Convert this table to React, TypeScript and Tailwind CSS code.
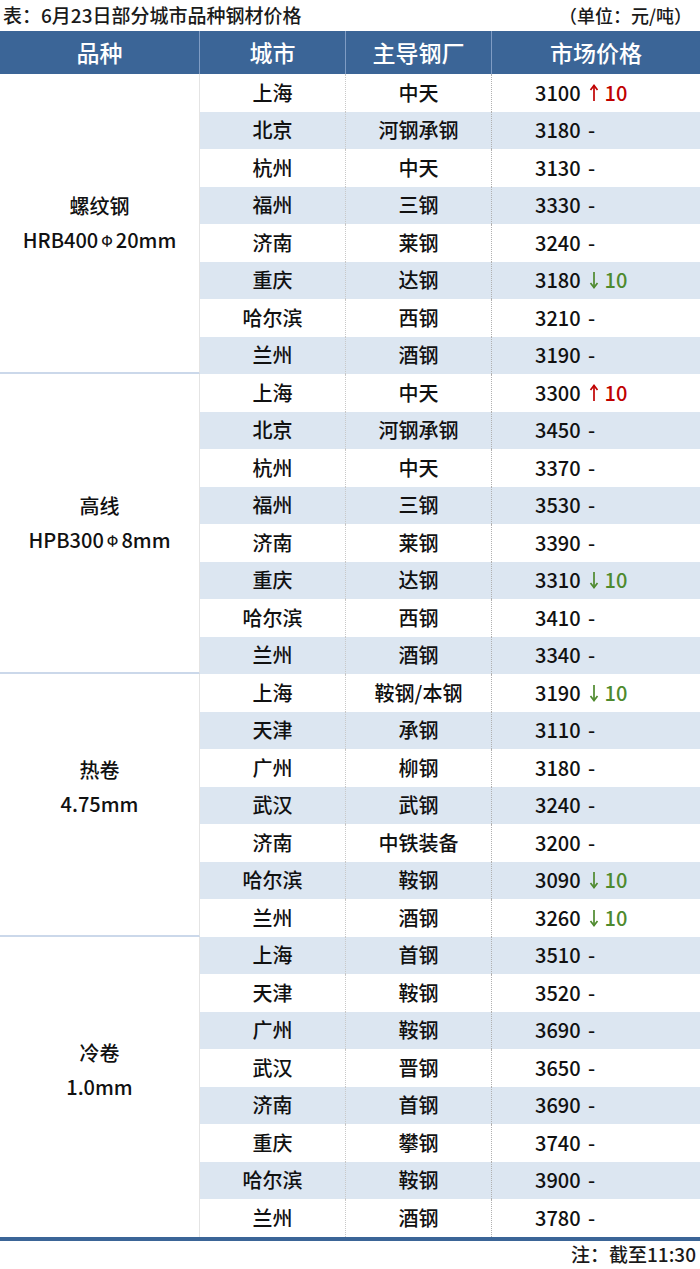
import React from 'react';

type Row = { city: string; mill: string; price: number; change?: number };
type Group = { name: string; spec: React.ReactNode; rows: Row[]; lift?: boolean };

const phi = <span className="text-[14px] align-[2px] mx-[3px]">Φ</span>;

const groups: Group[] = [
  {
    name: '螺纹钢',
    spec: <>HRB400{phi}20mm</>,
    rows: [
      { city: '上海', mill: '中天', price: 3100, change: 10 },
      { city: '北京', mill: '河钢承钢', price: 3180 },
      { city: '杭州', mill: '中天', price: 3130 },
      { city: '福州', mill: '三钢', price: 3330 },
      { city: '济南', mill: '莱钢', price: 3240 },
      { city: '重庆', mill: '达钢', price: 3180, change: -10 },
      { city: '哈尔滨', mill: '西钢', price: 3210 },
      { city: '兰州', mill: '酒钢', price: 3190 },
    ],
  },
  {
    name: '高线',
    spec: <>HPB300{phi}8mm</>,
    rows: [
      { city: '上海', mill: '中天', price: 3300, change: 10 },
      { city: '北京', mill: '河钢承钢', price: 3450 },
      { city: '杭州', mill: '中天', price: 3370 },
      { city: '福州', mill: '三钢', price: 3530 },
      { city: '济南', mill: '莱钢', price: 3390 },
      { city: '重庆', mill: '达钢', price: 3310, change: -10 },
      { city: '哈尔滨', mill: '西钢', price: 3410 },
      { city: '兰州', mill: '酒钢', price: 3340 },
    ],
  },
  {
    name: '热卷',
    spec: <>4.75mm</>,
    lift: true,
    rows: [
      { city: '上海', mill: '鞍钢/本钢', price: 3190, change: -10 },
      { city: '天津', mill: '承钢', price: 3110 },
      { city: '广州', mill: '柳钢', price: 3180 },
      { city: '武汉', mill: '武钢', price: 3240 },
      { city: '济南', mill: '中铁装备', price: 3200 },
      { city: '哈尔滨', mill: '鞍钢', price: 3090, change: -10 },
      { city: '兰州', mill: '酒钢', price: 3260, change: -10 },
    ],
  },
  {
    name: '冷卷',
    spec: <>1.0mm</>,
    lift: true,
    rows: [
      { city: '上海', mill: '首钢', price: 3510 },
      { city: '天津', mill: '鞍钢', price: 3520 },
      { city: '广州', mill: '鞍钢', price: 3690 },
      { city: '武汉', mill: '晋钢', price: 3650 },
      { city: '济南', mill: '首钢', price: 3690 },
      { city: '重庆', mill: '攀钢', price: 3740 },
      { city: '哈尔滨', mill: '鞍钢', price: 3900 },
      { city: '兰州', mill: '酒钢', price: 3780 },
    ],
  },
];

const Arrow = ({ up }: { up: boolean }) => (
  <svg width="10" height="20" viewBox="0 0 10 20" className="inline-block ml-[8px] mr-[6px]">
    {up ? (
      <>
        <line x1="5" y1="2.5" x2="5" y2="18" stroke="currentColor" strokeWidth="1.7" />
        <polyline points="1.5,7 5,2.5 8.5,7" fill="none" stroke="currentColor" strokeWidth="1.7" />
      </>
    ) : (
      <>
        <line x1="5" y1="2" x2="5" y2="17.5" stroke="currentColor" strokeWidth="1.7" />
        <polyline points="1.5,13 5,17.5 8.5,13" fill="none" stroke="currentColor" strokeWidth="1.7" />
      </>
    )}
  </svg>
);

const Price = ({ price, change }: { price: number; change?: number }) => {
  if (!change) {
    return (
      <span>
        {price} <span className="ml-[3px]">-</span>
      </span>
    );
  }
  const up = change > 0;
  return (
    <span className="flex items-center">
      <span>{price}</span>
      <span className={`flex items-center ${up ? 'text-[#c00000]' : 'text-[#4e8a2e]'}`}>
        <Arrow up={up} />
        <span>{Math.abs(change)}</span>
      </span>
    </span>
  );
};

export default function App() {
  let rowIndex = 0;
  return (
    <div
      className="w-[700px] h-[1269px] bg-white text-[#111]"
      style={{ fontFamily: '"Noto Sans CJK SC", "Noto Sans", sans-serif' }}
    >
      {/* Title */}
      <div className="h-[31px] flex items-center justify-between pl-[3px] pr-[8px] text-[19px] font-medium text-[#1a1a1a]">
        <span>表：6月23日部分城市品种钢材价格</span>
        <span className="text-[18px]">（单位：元/吨）</span>
      </div>

      {/* Header */}
      <div className="grid grid-cols-[200px_146px_146px_208px] h-[43px] bg-[#3b6597] text-white text-[23px] font-medium">
        <div className="flex items-center justify-center border-r border-[#7f9cc4]">品种</div>
        <div className="flex items-center justify-center border-r border-[#7f9cc4]">城市</div>
        <div className="flex items-center justify-center border-r border-[#7f9cc4]">主导钢厂</div>
        <div className="flex items-center justify-center">市场价格</div>
      </div>

      {/* Body */}
      <div className="text-[20px] font-medium">
        {groups.map((g, gi) => (
          <div key={g.name} className="flex">
            <div
              className={`w-[200px] flex flex-col items-center justify-center leading-[34px] border-r border-[#e4e4e4] ${
                g.lift ? 'pb-[34px]' : ''
              } ${gi < groups.length - 1 ? 'border-b-2 border-b-[#cbd8ea]' : ''}`}
            >
              <div>{g.name}</div>
              <div>{g.spec}</div>
            </div>
            <div className="flex-1">
              {g.rows.map((r) => {
                const striped = rowIndex++ % 2 === 1;
                return (
                  <div
                    key={r.city + r.price}
                    className={`grid grid-cols-[146px_146px_208px] h-[37.5px] ${striped ? 'bg-[#dce6f1]' : 'bg-white'}`}
                  >
                    <div className="flex items-center justify-center border-r border-dotted border-[#c8c8c8]">
                      {r.city}
                    </div>
                    <div className="flex items-center justify-center border-r border-dotted border-[#b0b0b0]">
                      {r.mill}
                    </div>
                    <div className="flex items-center pl-[43px]">
                      <Price price={r.price} change={r.change} />
                    </div>
                  </div>
                );
              })}
            </div>
          </div>
        ))}
      </div>

      {/* Bottom rule */}
      <div className="h-[4px] bg-[#3b6597]" />

      {/* Footer */}
      <div className="h-[28px] flex items-center justify-end pr-[4px] text-[19px] font-medium text-[#1a1a1a]">
        注：截至11:30
      </div>
    </div>
  );
}
